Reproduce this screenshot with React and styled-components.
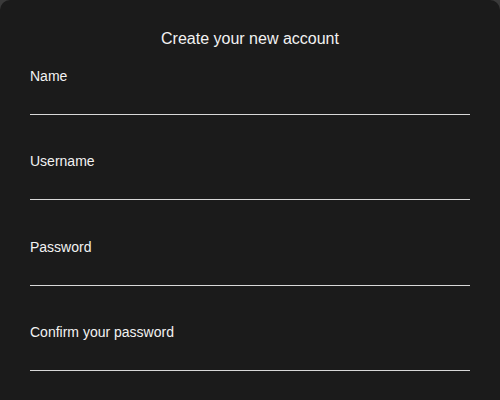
import React from "react";
import styled, { createGlobalStyle } from "styled-components";

const Global = createGlobalStyle`
  html, body {
    margin: 0;
    padding: 0;
    background: #3a3a3a;
    font-family: "Liberation Sans", Arial, sans-serif;
  }
`;

const Card = styled.form`
  box-sizing: border-box;
  width: 500px;
  min-height: 420px;
  background: #1b1b1b;
  border-radius: 10px;
  padding: 30px 30px 30px;
  display: flex;
  flex-direction: column;
`;

const Title = styled.h2`
  margin: 0 0 20px;
  font-size: 16px;
  line-height: 18px;
  font-weight: 400;
  color: #f2f2f2;
  text-align: center;
`;

const Fields = styled.div`
  display: flex;
  flex-direction: column;
  gap: 38.4px;
`;

const Field = styled.label`
  display: flex;
  flex-direction: column;
`;

const Label = styled.span`
  font-size: 14px;
  line-height: 16px;
  color: #f2f2f2;
`;

const Input = styled.input`
  box-sizing: border-box;
  height: 31px;
  background: transparent;
  border: none;
  border-bottom: 1px solid #d8d8d8;
  outline: none;
  color: #f2f2f2;
  font-family: inherit;
  font-size: 14px;
  padding: 0;
`;

const fields = [
  { label: "Name", type: "text" },
  { label: "Username", type: "text" },
  { label: "Password", type: "password" },
  { label: "Confirm your password", type: "password" },
];

export default function App() {
  return (
    <>
      <Global />
      <Card>
        <Title>Create your new account</Title>
        <Fields>
          {fields.map((f) => (
            <Field key={f.label}>
              <Label>{f.label}</Label>
              <Input type={f.type} />
            </Field>
          ))}
        </Fields>
      </Card>
    </>
  );
}
